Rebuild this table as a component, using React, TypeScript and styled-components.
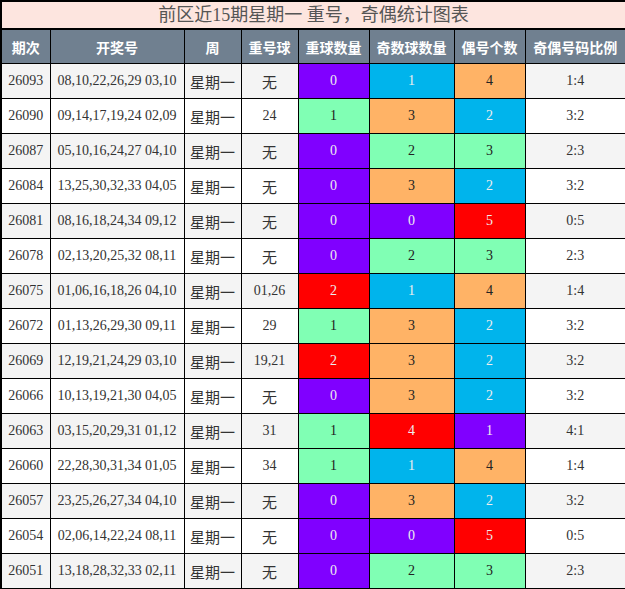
import React from "react";
import styled, { createGlobalStyle } from "styled-components";

const Global = createGlobalStyle`
  html, body { margin: 0; padding: 0; background: #fff; }
  body { font-family: "Liberation Serif", "Noto Sans CJK SC", serif; }
`;

const Table = styled.table`
  width: 625px;
  border-collapse: collapse;
  table-layout: fixed;
  border: 2px solid #000;
`;

const TitleCell = styled.td`
  height: 26px;
  padding: 0;
  background: #fde5df;
  color: #555;
  font-size: 18px;
  text-align: center;
  border-bottom: 2px solid #000;
  font-family: "Liberation Serif", "Noto Sans CJK SC", serif;
  line-height: 26px;
`;

const Th = styled.th`
  height: 33px;
  padding: 0;
  background: #708090;
  color: #fff;
  font-weight: bold;
  font-size: 14px;
  font-family: "Noto Sans CJK SC", sans-serif;
  border: 1px solid #000;
  text-align: center;
  white-space: nowrap;
`;

const Tr = styled.tr<{ $odd: boolean }>`
  background: ${(p) => (p.$odd ? "#f4f4f4" : "#fff")};
`;

const Td = styled.td<{ $cjk?: boolean; $bg?: string; $fg?: string }>`
  height: 34px;
  padding: 0;
  border: 1px solid #000;
  text-align: center;
  white-space: nowrap;
  font-size: ${(p) => (p.$cjk ? "15px" : "14px")};
  font-family: ${(p) =>
    p.$cjk ? '"Noto Sans CJK SC", sans-serif' : '"Liberation Serif", "Noto Sans CJK SC", serif'};
  color: ${(p) => p.$fg || "#333"};
  background: ${(p) => p.$bg || "transparent"};
`;

const PURPLE = "#8000ff";
const CYAN = "#00b4ec";
const ORANGE = "#ffb366";
const GREEN = "#80ffb4";
const RED = "#ff0000";

const light = (c: string) => c === PURPLE || c === CYAN || c === RED;

const col5: Record<number, string> = { 0: PURPLE, 1: GREEN, 2: RED };
const col6: Record<number, string> = { 0: PURPLE, 1: CYAN, 2: GREEN, 3: ORANGE, 4: RED };
const col7: Record<number, string> = { 1: PURPLE, 2: CYAN, 3: GREEN, 4: ORANGE, 5: RED };

const rows: [string, string, string, number, number, number, string][] = [
  ["26093", "08,10,22,26,29 03,10", "无", 0, 1, 4, "1:4"],
  ["26090", "09,14,17,19,24 02,09", "24", 1, 3, 2, "3:2"],
  ["26087", "05,10,16,24,27 04,10", "无", 0, 2, 3, "2:3"],
  ["26084", "13,25,30,32,33 04,05", "无", 0, 3, 2, "3:2"],
  ["26081", "08,16,18,24,34 09,12", "无", 0, 0, 5, "0:5"],
  ["26078", "02,13,20,25,32 08,11", "无", 0, 2, 3, "2:3"],
  ["26075", "01,06,16,18,26 04,10", "01,26", 2, 1, 4, "1:4"],
  ["26072", "01,13,26,29,30 09,11", "29", 1, 3, 2, "3:2"],
  ["26069", "12,19,21,24,29 03,10", "19,21", 2, 3, 2, "3:2"],
  ["26066", "10,13,19,21,30 04,05", "无", 0, 3, 2, "3:2"],
  ["26063", "03,15,20,29,31 01,12", "31", 1, 4, 1, "4:1"],
  ["26060", "22,28,30,31,34 01,05", "34", 1, 1, 4, "1:4"],
  ["26057", "23,25,26,27,34 04,10", "无", 0, 3, 2, "3:2"],
  ["26054", "02,06,14,22,24 08,11", "无", 0, 0, 5, "0:5"],
  ["26051", "13,18,28,32,33 02,11", "无", 0, 2, 3, "2:3"],
];

const widths = [49, 134, 57, 57, 71, 85, 71, 101];
const headers = ["期次", "开奖号", "周", "重号球", "重球数量", "奇数球数量", "偶号个数", "奇偶号码比例"];

const ColorCell: React.FC<{ bg: string; v: number }> = ({ bg, v }) => (
  <Td $bg={bg} $fg={light(bg) ? "#eee" : "#222"}>
    {v}
  </Td>
);

export default function App() {
  return (
    <>
      <Global />
      <Table>
        <colgroup>
          {widths.map((w, i) => (
            <col key={i} style={{ width: w }} />
          ))}
        </colgroup>
        <tbody>
          <tr>
            <TitleCell colSpan={8}>前区近15期星期一 重号，奇偶统计图表</TitleCell>
          </tr>
          <tr>
            {headers.map((h) => (
              <Th key={h}>{h}</Th>
            ))}
          </tr>
          {rows.map((r, i) => (
            <Tr key={r[0]} $odd={i % 2 === 0}>
              <Td>{r[0]}</Td>
              <Td>{r[1]}</Td>
              <Td $cjk>星期一</Td>
              <Td $cjk={r[2] === "无"}>{r[2]}</Td>
              <ColorCell bg={col5[r[3]]} v={r[3]} />
              <ColorCell bg={col6[r[4]]} v={r[4]} />
              <ColorCell bg={col7[r[5]]} v={r[5]} />
              <Td>{r[6]}</Td>
            </Tr>
          ))}
        </tbody>
      </Table>
    </>
  );
}
